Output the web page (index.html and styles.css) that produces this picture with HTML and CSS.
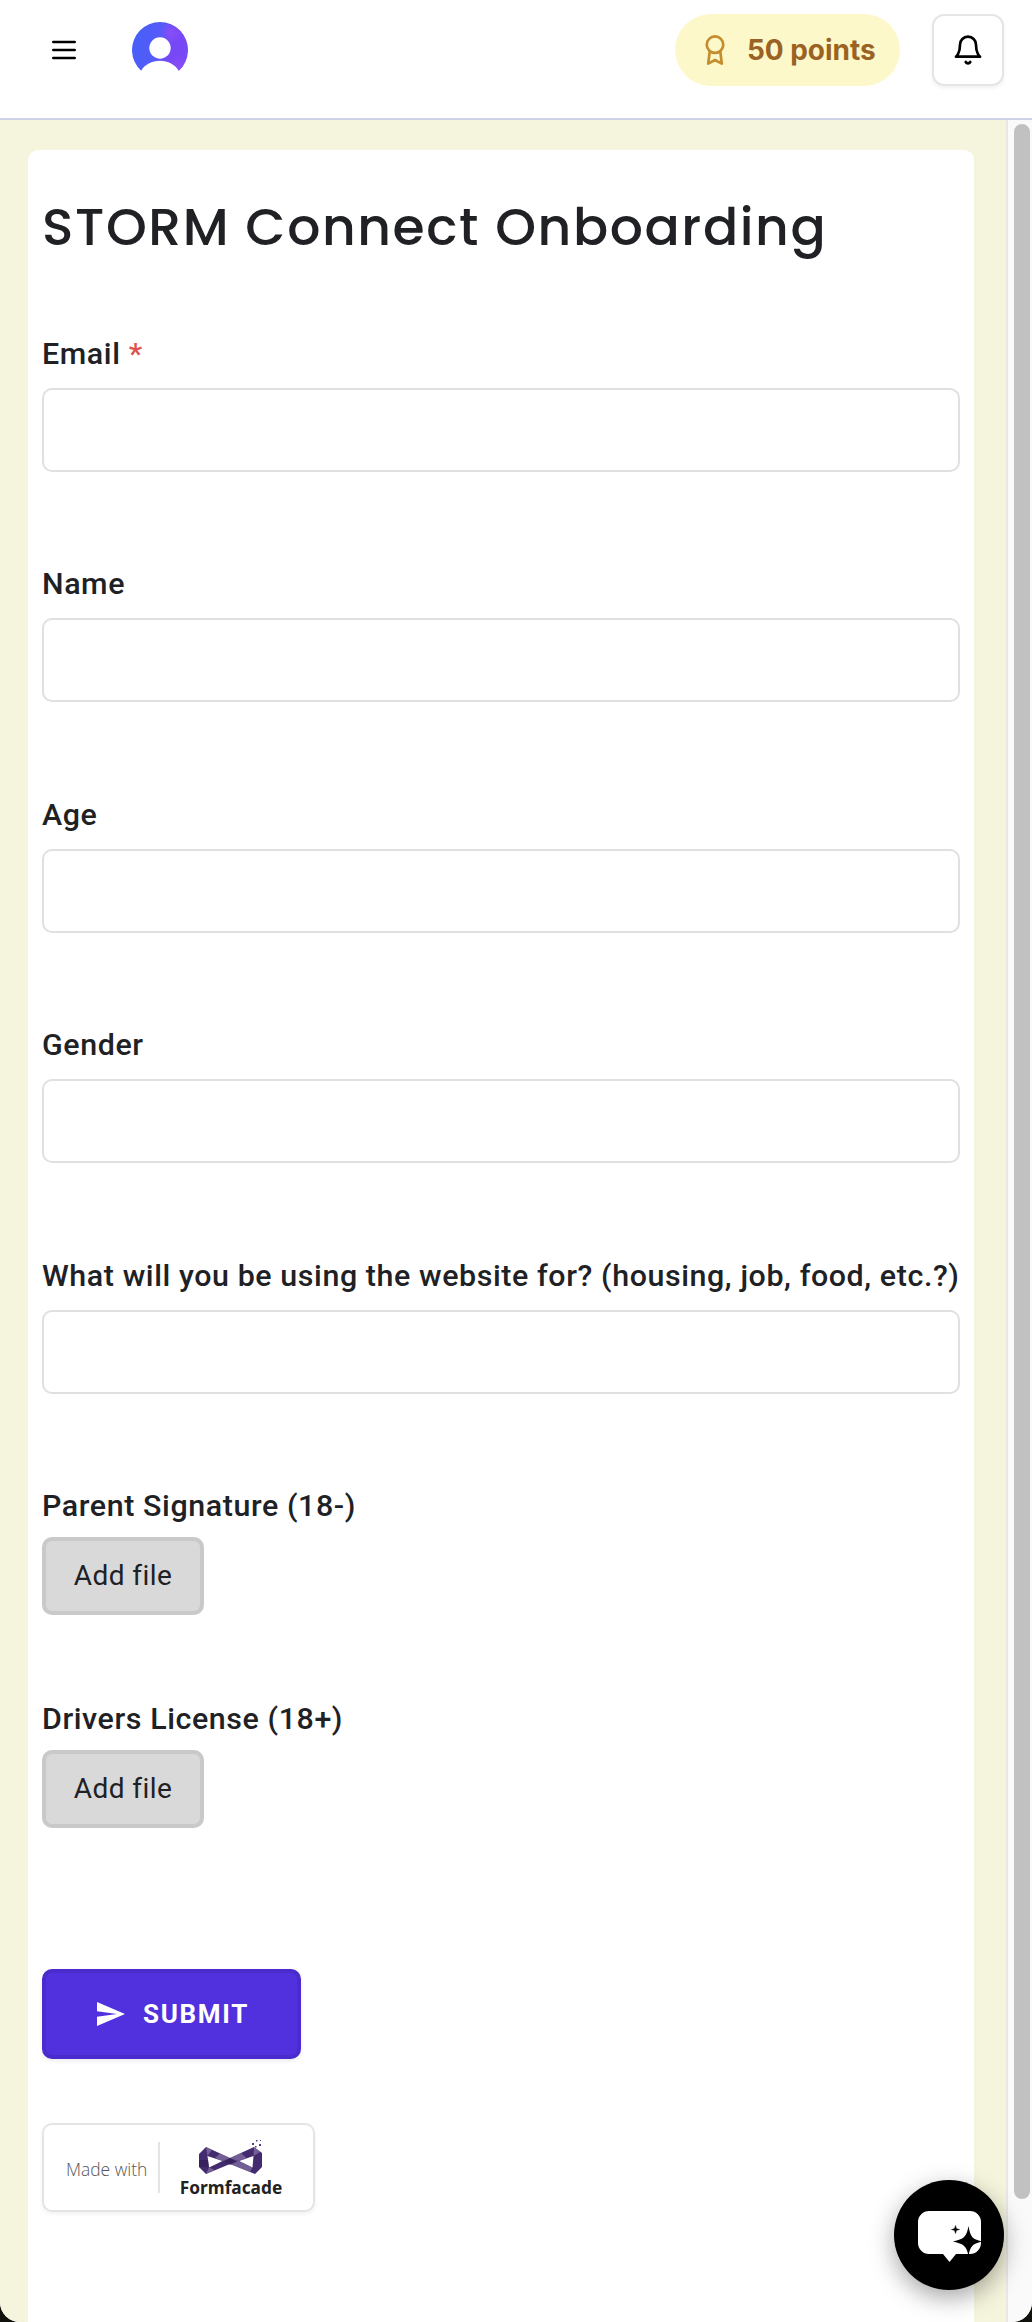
FILE: index.html
```html
<!DOCTYPE html>
<html lang="en">
<head>
<meta charset="utf-8">
<title>STORM Connect Onboarding</title>
<link rel="stylesheet" href="styles.css">
</head>
<body>
<div class="app">
  <header class="topbar">
    <button class="menu" aria-label="Menu">
      <svg width="24" height="20" viewBox="0 0 24 20" stroke="#000" stroke-width="2.6" stroke-linecap="round"><path d="M1.3 2h21.4M1.3 10h21.4M1.3 18h21.4"/></svg>
    </button>
    <svg class="avatar" width="56" height="56" viewBox="0 0 56 56">
      <defs>
        <linearGradient id="av" x1="0" y1=".35" x2="1" y2=".6"><stop offset=".1" stop-color="#4a5ff8"/><stop offset=".45" stop-color="#565af8"/><stop offset=".7" stop-color="#7648f5"/><stop offset="1" stop-color="#7a49f5"/></linearGradient>
        <radialGradient id="glow"><stop offset="0" stop-color="#8b4df7"/><stop offset="1" stop-color="#8b4df7" stop-opacity="0"/></radialGradient>
        <clipPath id="disc"><path d="M9.200 48.800A28 28 0 1 1 46.800 48.800C43.500 42.500 36 38.700 28 38.700S12.500 42.500 9.200 48.800Z"/></clipPath>
      </defs>
      <g clip-path="url(#disc)">
        <rect width="56" height="56" fill="url(#av)"/>
        <circle cx="39" cy="11" r="11" fill="url(#glow)"/>
        <circle cx="47" cy="46" r="13" fill="url(#glow)"/>
        <circle cx="28" cy="26" r="10.7" fill="#fff"/>
      </g>
    </svg>
    <div class="points">
      <svg width="32" height="32" viewBox="0 0 24 24" fill="none" stroke="#c48d2d" stroke-width="2" stroke-linecap="round" stroke-linejoin="round"><circle cx="12" cy="8" r="6.200"/><path d="M8 13.500 6.900 22.200 12 19.500 17.100 22.200 16 13.500"/></svg>
      <span>50 points</span>
    </div>
    <button class="bell" aria-label="Notifications">
      <svg width="32" height="32" viewBox="0 0 24 24" fill="none" stroke="#000" stroke-width="2" stroke-linecap="round" stroke-linejoin="round"><path d="M6 8a6 6 0 0 1 12 0c0 7 3 9 3 9H3s3-2 3-9M10.300 21a1.940 1.940 0 0 0 3.400 0"/></svg>
    </button>
  </header>
  <div class="viewport">
    <main class="page">
      <form class="card">
        <h1>STORM Connect Onboarding</h1>
        <div class="field"><label for="f1">Email <span class="req">*</span></label><input id="f1"></div>
        <div class="field tall"><label for="f2">Name</label><input id="f2"></div>
        <div class="field"><label for="f3">Age</label><input id="f3"></div>
        <div class="field tall"><label for="f4">Gender</label><input id="f4"></div>
        <div class="field"><label for="f5">What will you be using the website for? (housing, job, food, etc.?)</label><input id="f5"></div>
        <div class="field upload"><label>Parent Signature (18-)</label><button type="button" class="add">Add file</button></div>
        <div class="field upload"><label>Drivers License (18+)</label><button type="button" class="add">Add file</button></div>
        <button type="button" class="submit">
          <svg width="28" height="24" viewBox="0 0 28 24" fill="#fff"><path d="M0 0 28 12 0 24V14.700L20 12 0 9.300Z"/></svg>
          <span>SUBMIT</span>
        </button>
        <div class="made">
          <span class="made-text">Made with</span>
          <span class="brand">
            <svg width="66" height="40" viewBox="0 0 66 40">
              <path d="M1 18 8 11 32 22 56 11 64 17V31L57 38 32 28 8 38 1 31ZM9.500 20 11 31.500 24.500 25ZM55.500 20 41 25 54.500 31.500Z" fill="#432b70" fill-rule="evenodd"/>
              <path d="M8 11 14 13.800 9.500 20ZM22 17.500 32 22 26 25.500 17 22ZM38 25.500 49 22.500 43 17 32 22ZM11 31.500 17 34 8 38ZM40 25 54.500 31.500 52 36 32 28ZM56 11 62 16 55.500 20Z" fill="#8470a3" opacity=".75"/>
              <path d="M24.500 25 32 22 40 25 32 29ZM1 24 10 24 11 31 1 31Z" fill="#2d1b50" opacity=".55"/>
              <path d="M54 7h2v2h-2zM58 4h1.500v1.500H58zM61 8h2v2h-2zM57 10h1.500v1.500H57zM62 4h1v1h-1zM53 12h1.500v1.500H53z" fill="#5c3b8b"/>
            </svg>
            <span class="brand-name">Formfacade</span>
          </span>
        </div>
      </form>
    </main>
    <div class="scrollbar"><div class="thumb"></div></div>
  </div>
  <button class="chat" aria-label="Chat">
    <svg width="64" height="52" viewBox="0 0 64 52"><path d="M11 0H52A11 11 0 0 1 63 11V32A11 11 0 0 1 52 43H38L31.500 51 25 43H11A11 11 0 0 1 0 32V11A11 11 0 0 1 11 0Z" fill="#fff"/><path d="M50.500 15C52.500 26 54 28 64 30.500 54 33 52.500 35 50.500 45 48.500 35 46 33 35 30.500 46 28 48.500 26 50.500 15Z"/><path d="M37.500 14.500C38.200 17.500 38.500 18 41.500 18.500 38.500 19 38.200 19.500 37.500 22.500 36.800 19.500 36.500 19 33.500 18.500 36.500 18 36.800 17.500 37.500 14.500Z" stroke="#000" stroke-width=".5"/></svg>
  </button>
</div>
</body>
</html>
```
FILE: styles.css
```css
* { box-sizing: border-box; }
body { margin: 0; background: #11120b; font-family: Roboto, "Liberation Sans", sans-serif; color: #202124; }
button { font: inherit; color: inherit; padding: 0; border: 0; background: none; }
svg { display: block; flex: none; }
.app { position: relative; height: 2322px; display: flex; flex-direction: column; overflow: hidden; background: #fff; border-radius: 0 0 20px 20px; }
.topbar { height: 120px; flex: none; display: flex; align-items: flex-start; padding: 14px 28px 0 28px; border-bottom: 2px solid #cdd2e6; }
.menu { width: 72px; height: 72px; display: grid; place-items: center; }
.avatar { margin: 8px 0 0 32px; }
.points { margin-left: auto; width: 225px; height: 72px; border-radius: 36px; background: #fdf8c9; display: flex; align-items: center; padding-left: 24px; gap: 16px; font: 700 28px/40px Inter, sans-serif; letter-spacing: -.05px; color: #9a6324; white-space: nowrap; }
.bell { margin-left: 32px; width: 72px; height: 72px; border: 2px solid #e5e5e5; border-radius: 12px; display: grid; place-items: center; box-shadow: 0 2px 4px rgba(0,0,0,.06); }
.viewport { flex: 1; display: flex; }
.page { flex: 1; background: #f5f4dc; padding: 30px 32px 0 28px; display: flex; }
.card { flex: 1; background: #fff; border-radius: 10px 10px 0 0; padding: 39px 14px 0 14px; }
h1 { margin: 0 0 57px; font: 500 52px/76px Poppins, Inter, sans-serif; letter-spacing: 1.600px; white-space: nowrap; }
.field { height: 230px; display: flex; flex-direction: column; align-items: flex-start; }
.tall { height: 231px; }
.field label { height: 66px; padding-top: 12px; font-size: 30.400px; font-weight: 500; line-height: 40px; letter-spacing: .59px; white-space: nowrap; }
.req { color: #e0524c; }
.field input { width: 100%; height: 84px; border: 2px solid #e0e0e0; border-radius: 10px; background: #fff; }
.upload { height: 213px; }
.field.upload label { height: 63px; }
.add { width: 162px; height: 78px; border: 4px solid #c9c9c9; border-radius: 10px; background: #d9d9d9; font-size: 28px; letter-spacing: .45px; padding-bottom: 2px; }
.field.upload { height: 213px; }
.submit { margin-top: 69px; width: 259px; height: 90px; border: 4px solid #4a2bcd; border-radius: 10px; background: #5130de; color: #fff; display: flex; align-items: center; padding-left: 51px; gap: 18px; font-size: 26px; font-weight: 700; letter-spacing: 1.700px; box-shadow: 0 2px 4px rgba(0,0,0,.08); }
.made { margin-top: 64px; width: 273px; height: 89px; border: 2px solid #e4e4e4; border-radius: 10px; display: flex; align-items: center; padding-left: 22px; box-shadow: 0 2px 4px rgba(0,0,0,.06); }
.made-text { width: 94px; height: 51px; border-right: 2px solid #e4e4e4; font: 300 17.400px/55px "Open Sans", sans-serif; color: #555; white-space: nowrap; }
.brand { margin: 10px 0 0 20px; width: 102px; height: 74px; display: flex; flex-direction: column; align-items: center; }
.brand-name { font: 700 17.300px/24px "Noto Sans", sans-serif; color: #222; white-space: nowrap; }
.scrollbar { width: 26px; background: #fafafa; border-left: 2px solid #e8e8e8; padding: 4px 2px 0 6px; }
.thumb { width: 16px; height: 2075px; border-radius: 8px; background: #c1c1c1; }
.chat { position: absolute; left: 894px; top: 2180px; width: 110px; height: 110px; border-radius: 50%; background: #000; display: grid; place-items: center; padding: 3px 0 0 2px; box-shadow: 0 8px 24px rgba(0,0,0,.35); }
```
